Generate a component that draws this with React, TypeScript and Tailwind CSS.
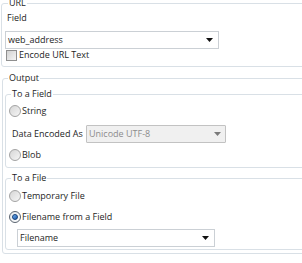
import React from "react";

function Arrow({ color }: { color: string }) {
  return (
    <svg width="7" height="4" viewBox="0 0 7 4" className="shrink-0">
      <path d="M0 0H7L3.5 4Z" fill={color} />
    </svg>
  );
}

function Combo({
  value,
  className,
  disabled,
}: {
  value: string;
  className: string;
  disabled?: boolean;
}) {
  return (
    <div
      className={
        disabled
          ? `flex h-[18px] items-center justify-between rounded-[1px] border border-[#c2c2c2] bg-[#f0f0f0] pl-[2px] pr-[4px] text-[#8c8c8c] ${className}`
          : `flex h-[18px] items-center justify-between border border-[#cbd0d5] bg-white pl-[2px] pr-[5px] ${className}`
      }
    >
      <span>{value}</span>
      <Arrow color={disabled ? "#7a7a7a" : "#111111"} />
    </div>
  );
}

function Radio({ label, checked, className }: { label: string; checked?: boolean; className: string }) {
  return (
    <label className={`flex h-[12px] items-center gap-[1px] ${className}`}>
      <span
        className={
          checked
            ? "flex h-[12px] w-[12px] items-center justify-center rounded-full border border-[#5a6470] bg-linear-to-br from-[#e2e6ea] to-[#ffffff]"
            : "flex h-[12px] w-[12px] items-center justify-center rounded-full border border-[#a3a3a3] bg-linear-to-br from-[#d6d6d6] to-[#f6f6f6]"
        }
      >
        {checked && (
          <span className="h-[6px] w-[6px] rounded-full border border-[#123f7a] bg-linear-to-br from-[#6fb0f0] to-[#1a56a8]" />
        )}
      </span>
      <span>{label}</span>
    </label>
  );
}

export default function App() {
  return (
    <div className="h-[263px] w-[302px] overflow-hidden bg-white font-['Open_Sans',sans-serif] text-[9px] leading-[12px] text-[#1e1e1e]">
      <fieldset className="mt-[-3px] ml-[1px] w-[330px] rounded-[3px] border border-[#d9e0e6] pb-[5px] pl-[3px]">
        <legend className="ml-[3px] px-[1px]">URL</legend>
        <div className="mt-[3px] ml-[2px] h-[12px]">Field</div>
        <Combo value="web_address" className="mt-[7px] w-[214px]" />
        <label className="flex h-[12px] items-center gap-[2px]">
          <span className="ml-[1px] h-[11px] w-[11px] border border-[#8f8f8f] bg-linear-to-br from-[#d2d2d2] to-[#f5f5f5]" />
          <span>Encode URL Text</span>
        </label>
      </fieldset>

      <fieldset className="mt-[5px] ml-[2px] w-[330px] rounded-[3px] border border-[#d9e0e6] pb-[3px] pl-[2px]">
        <legend className="ml-[3px] px-[1px]">Output</legend>

        <fieldset className="mt-[4px] rounded-[3px] border border-[#d9e0e6] pb-[6px] pl-[3px]">
          <legend className="ml-[2px] px-[1px]">To a Field</legend>
          <Radio label="String" className="mt-[5px]" />
          <div className="mt-[8px] flex h-[18px] items-center">
            <span className="ml-[3px] w-[74px]">Data Encoded As</span>
            <Combo value="Unicode UTF-8" className="w-[140px]" disabled />
          </div>
          <Radio label="Blob" className="mt-[6px]" />
        </fieldset>

        <fieldset className="mt-[4px] rounded-[3px] border border-[#d9e0e6] pb-[2px] pl-[3px]">
          <legend className="ml-[2px] px-[1px]">To a File</legend>
          <Radio label="Temporary File" className="mt-[6px]" />
          <Radio label="Filename from a Field" checked className="mt-[9px]" />
          <Combo value="Filename" className="mt-[6px] ml-[8px] w-[198px]" />
        </fieldset>
      </fieldset>
    </div>
  );
}
